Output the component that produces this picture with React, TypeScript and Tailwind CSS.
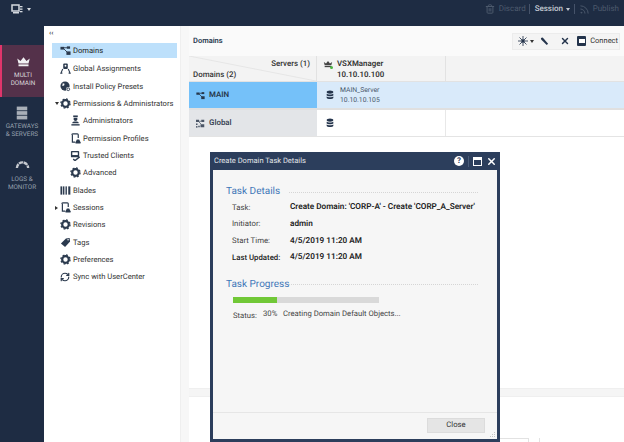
import React from "react";
import { RefreshCw, X, Trash2, Rss } from "lucide-react";

const D = "#2b3a4e";
const Svg = ({ s = 11, c = D, children, className = "" }: { s?: number; c?: string; children: React.ReactNode; className?: string }) => (
  <svg width={s} height={s} viewBox="0 0 12 12" fill={c} stroke="none" className={`shrink-0 ${className}`}>{children}</svg>
);
const Net = ({ s = 11, c = D }: { s?: number; c?: string }) => (
  <Svg s={s} c={c}>
    <rect x="0.5" y="2" width="4" height="3" />
    <rect x="7.5" y="1.5" width="3.5" height="2.6" />
    <rect x="7" y="7" width="4.5" height="3.8" />
    <path d="M4 3h4M4 4l4 4" stroke={c} strokeWidth="1" fill="none" />
  </Svg>
);
const GlobalGrid = () => (
  <Svg s={9} c="#4a5566">
    <rect x="0" y="1" width="4" height="3" /><rect x="7" y="1" width="4" height="3" />
    <rect x="0" y="6" width="2" height="2" /><rect x="3" y="9" width="2" height="2" /><rect x="0" y="9.5" width="2" height="2" />
    <rect x="6" y="7" width="5" height="4" />
    <path d="M4 3h3M4 4l3 3" stroke="#4a5566" strokeWidth="1" fill="none" />
  </Svg>
);
const Gear = () => (
  <Svg>
    <circle cx="6" cy="6" r="3.6" fill="none" stroke={D} strokeWidth="2.4" />
    <circle cx="6" cy="6" r="5" fill="none" stroke={D} strokeWidth="1.4" strokeDasharray="2 1.93" />
  </Svg>
);
const Person = () => (
  <Svg>
    <rect x="3.5" y="0.5" width="5" height="6" rx="1" />
    <circle cx="6" cy="3" r="1" fill="#fff" />
    <path d="M3 6.5L1 11h1.6M9 6.5l2 4.500h-1.600" stroke={D} strokeWidth="1.2" fill="none" />
  </Svg>
);
const Globe = () => (
  <Svg>
    <circle cx="5.500" cy="5.500" r="5" />
    <path d="M3 2.500l2 .5-.5 2-2 .5z" fill="#fff" />
    <circle cx="9" cy="9" r="2.400" fill="#fff" />
    <circle cx="9" cy="9" r="1.500" fill="none" stroke={D} strokeWidth="1" />
  </Svg>
);
const Admin = () => (
  <Svg>
    <rect x="3.500" y="0.500" width="5" height="1.800" />
    <path d="M4 3h4v1.500a2 2 0 0 1-4 0z" />
    <path d="M2.500 8.500c0-1 1.500-1.500 3.500-1.500s3.500.5 3.500 1.500V9h-7z" />
    <rect x="1.500" y="10" width="9" height="1.500" />
  </Svg>
);
const Phone = () => (
  <Svg>
    <path d="M2 2a1 1 0 0 1 1-1h5a1 1 0 0 1 1 1v3.500" fill="none" stroke={D} strokeWidth="1.300" />
    <path d="M2.600 1.500v8.500h3" fill="none" stroke={D} strokeWidth="1.300" />
    <path d="M6 10l1.500-3h2.500l1.500 3v1.500H6z" />
  </Svg>
);
const Trusted = () => (
  <Svg>
    <rect x="1" y="1" width="9" height="7" rx="1" />
    <rect x="2.500" y="2.500" width="6" height="3" fill="#fff" />
    <path d="M3.500 10l2 1.500 5-4" fill="none" stroke={D} strokeWidth="1.500" />
  </Svg>
);
const Blades = () => (
  <Svg>
    <rect x="0.500" y="1.500" width="2" height="9" /><rect x="3.300" y="1.500" width="1.500" height="9" />
    <rect x="6" y="1.500" width="1.500" height="9" /><rect x="9" y="1.500" width="2.300" height="9" />
  </Svg>
);
const TagI = () => (
  <Svg><path d="M6.500 1.500l4-.5.5 4-5.500 6L1 7z" /><circle cx="8.800" cy="3" r=".8" fill="#fff" /></Svg>
);
const Sync = () => <RefreshCw size={10} strokeWidth={2.8} color={D} className="shrink-0" />;
const Crown = ({ s = 15, c = "#f1f1f3" }: { s?: number; c?: string }) => (
  <Svg s={s} c={c}>
    <path d="M1 3.500l2.600 2L6 2.500l2.400 3L11 3.500 10 7.500H2z" />
    <rect x="2" y="8.300" width="8" height="1.500" />
  </Svg>
);
const Rack = () => (
  <Svg s={14} c="#a9afb8">
    <rect x="1.500" y="0.500" width="9" height="3.200" /><rect x="1.500" y="4.400" width="9" height="3.200" /><rect x="1.500" y="8.300" width="9" height="3.200" />
  </Svg>
);
const GaugeI = () => (
  <Svg s={15} c="#c5c9cf">
    <path d="M1.500 8a4.500 4.500 0 0 1 9 0" fill="none" stroke="#c5c9cf" strokeWidth="1.900" strokeDasharray="3.400 .5" />
  </Svg>
);
const Db = () => (
  <Svg s={10} c="#24344c">
    <ellipse cx="6" cy="2.500" rx="4" ry="2" />
    <path d="M2 4.500c1 1.200 7 1.200 8 0v2c-1 1.200-7 1.200-8 0z" />
    <path d="M2 7.800c1 1.200 7 1.200 8 0v1.700c-1 1.800-7 1.800-8 0z" />
  </Svg>
);
const Star = () => (
  <Svg s={10} c="#24344c">
    <circle cx="6" cy="6" r="2" />
    <path d="M6 0v12M0 6h12M1.800 1.800l8.400 8.400M10.200 1.800l-8.400 8.400" stroke="#24344c" strokeWidth="1" />
  </Svg>
);
const Caret = ({ right = false }: { right?: boolean }) => (
  <span className={right ? "w-0 h-0 border-y-[2px] border-y-transparent border-l-[3px] border-l-[#333]" : "w-0 h-0 border-x-[2px] border-x-transparent border-t-[3px] border-t-[#333]"} />
);

const items: { label: string; Icon: any; indent?: boolean; caret?: "d" | "r"; active?: boolean }[] = [
  { label: "Domains", Icon: Net, active: true },
  { label: "Global Assignments", Icon: Person },
  { label: "Install Policy Presets", Icon: Globe },
  { label: "Permissions & Administrators", Icon: Gear, caret: "d" },
  { label: "Administrators", Icon: Admin, indent: true },
  { label: "Permission Profiles", Icon: Phone, indent: true },
  { label: "Trusted Clients", Icon: Trusted, indent: true },
  { label: "Advanced", Icon: Gear, indent: true },
  { label: "Blades", Icon: Blades },
  { label: "Sessions", Icon: Phone, caret: "r" },
  { label: "Revisions", Icon: Gear },
  { label: "Tags", Icon: TagI },
  { label: "Preferences", Icon: Gear },
  { label: "Sync with UserCenter", Icon: Sync },
];

const Rail = ({ icon, lines, active }: { icon: React.ReactNode; lines: string[]; active?: boolean }) => (
  <div className={`flex flex-col items-center pt-[9px] w-full h-[52px] ${active ? "bg-[#54314a] border-l-2 border-[#e0356b] text-[#dcd8dc]" : "text-[#98a1ae]"}`}>
    {icon}
    <div className="mt-[2px]">
      {lines.map((l) => (
        <div key={l} className="text-[6.4px] leading-[8px] text-center whitespace-nowrap">{l}</div>
      ))}
    </div>
  </div>
);

const Row = ({ k, v, bold }: { k: string; v: string; bold?: boolean }) => (
  <div className="flex items-center h-[16.7px]">
    <span className={`w-[58px] text-[7.8px] ${bold ? "font-medium text-[#222]" : "text-[#444]"}`}>{k}</span>
    <span className="text-[8.2px] font-semibold text-[#222] whitespace-nowrap">{v}</span>
  </div>
);

const Heading = ({ t }: { t: string }) => (
  <div className="flex items-center">
    <span className="w-[63px] text-[#3f76b8] text-[10px] leading-[14px] whitespace-nowrap">{t}</span>
    <span className="flex-1 border-t border-dotted border-[#d5d5d5]" />
  </div>
);

export default function App() {
  return (
    <div className="relative w-[624px] h-[442px] overflow-hidden bg-[#1e2c43] flex flex-col [text-rendering:geometricPrecision]" style={{ fontFamily: 'Roboto,"Open Sans",sans-serif' }}>
      <div className="h-[26px] flex items-start shrink-0">
        <div className="w-[44px] h-[18px] flex items-center pl-[11px] gap-[4px] text-[#d5d9df]">
          <Svg s={12} c="#d5d9df">
            <rect x="1" y="2" width="7" height="6" fill="none" stroke="#d5d9df" strokeWidth="1.500" />
            <rect x="2" y="9" width="6" height="1.500" /><rect x="9" y="3" width="2.500" height="1.300" /><rect x="9" y="5.500" width="2.500" height="1.300" /><rect x="9" y="8" width="2.500" height="1.300" />
          </Svg>
          <span className="w-0 h-0 border-x-[2px] border-x-transparent border-t-[3px] border-t-[#d5d9df]" />
        </div>
        <div className="ml-auto h-[18px] flex items-center text-[8px] pr-[5px]">
          <Trash2 size={10} strokeWidth={2.4} className="text-[#4d5a6d]" />
          <span className="ml-[4px] text-[#4d5a6d] w-[25px]">Discard</span>
          <span className="mx-[5px] h-[10px] w-px bg-[#46536a]" />
          <span className="text-[#c3c9d2] font-medium w-[26px]">Session</span>
          <span className="ml-[5px] w-0 h-0 border-x-[2px] border-x-transparent border-t-[3px] border-t-[#c3c9d2]" />
          <span className="mx-[4px] h-[10px] w-px bg-[#46536a]" />
          <Rss size={11} className="text-[#4d5a6d]" />
          <span className="ml-[3px] text-[#4d5a6d]">Publish</span>
        </div>
      </div>
      <div className="flex flex-1 min-h-0">
        <div className="w-[44px] shrink-0 flex flex-col pt-[19px]">
          <Rail icon={<Crown />} lines={["MULTI", "DOMAIN"]} active />
          <Rail icon={<Rack />} lines={["GATEWAYS", "& SERVERS"]} />
          <Rail icon={<GaugeI />} lines={["LOGS &", "MONITOR"]} />
        </div>
        <div className="w-[137px] shrink-0 bg-white border-r border-[#efefef] pt-[4px]">
          <div className="text-[7px] leading-[7px] text-[#333] pl-[5px] font-bold">‹‹</div>
          <div className="mt-[6px] ml-[8px] w-[125px]">
            {items.map(({ label, Icon, indent, caret, active }) => (
              <div key={label} className={`relative flex items-center h-[17.33px] text-[7.6px] whitespace-nowrap ${active ? "bg-[#bde0fb] bg-clip-padding border-b-2 border-transparent text-[#222]" : "text-[#333]"} ${indent ? "pl-[18px]" : "pl-[8px]"}`}>
                {caret && <span className="absolute left-[3px] top-[7px] flex"><Caret right={caret === "r"} /></span>}
                <span className="w-[13px] shrink-0 flex"><Icon /></span>
                {label}
              </div>
            ))}
          </div>
        </div>
        <div className="w-[8px] shrink-0 bg-[#f7f7f7]" />
        <div className="flex-1 min-w-0 bg-white flex flex-col">
          <div className="h-[30px] shrink-0 bg-[#fafafa] flex items-center pl-[4px]">
            <span className="text-[7.5px] font-semibold text-[#2a3a50]">Domains</span>
            <div className="ml-auto flex items-center h-[17px] bg-[#f4f4f4] border border-[#ececec] pl-[5px] pr-[1px] mr-[4px] text-[#24344c]">
              <span className="flex items-center gap-[2px] w-[19px]"><Star /><Caret /></span>
              <svg width="9" height="9" viewBox="0 0 10 10" className="ml-[3px]"><path d="M1 1l2-.5 6 7-1.500 1.500-6-6z" fill="#24344c" /></svg>
              <X size={10} strokeWidth={3.4} className="ml-[11px]" />
              <span className="ml-[7px] flex items-center gap-[4px] text-[7.5px] text-[#333]"><span className="w-[9px] h-[10px] rounded-[1px] bg-[#24344c] flex items-center justify-center"><span className="w-[6px] h-[4px] bg-white" /></span>Connect</span>
            </div>
          </div>
          <div className="grid grid-cols-[128px_129px_1fr] grid-rows-[26px_28px_26px] text-[7.9px] border-b border-[#e4e4e4]">
            <div className="bg-[#f3f3f3] border-r border-b border-[#e2e2e2] relative px-[4px] text-[#333] font-medium">
              <svg className="absolute inset-0 w-full h-full" preserveAspectRatio="none" viewBox="0 0 100 100"><path d="M0 0L100 100" stroke="#e6e6e6" strokeWidth="1" vectorEffect="non-scaling-stroke" /></svg>
              <div className="relative text-right pr-[2px] mt-[2px] leading-[11px]">Servers (1)</div>
              <div className="relative leading-[11px]">Domains (2)</div>
            </div>
            <div className="bg-[#f3f3f3] border-r border-b border-[#e2e2e2] font-semibold leading-[11px] text-[#333] pt-[2px] pl-[6px]">
              <div className="flex items-center gap-[4px]">
                <span className="relative flex"><Crown s={10} c="#444" /><span className="absolute right-0 bottom-0 w-[3px] h-[3px] rounded-full bg-[#4bb543]" /></span>
                VSXManager
              </div>
              <div className="pl-[14px]">10.10.10.100</div>
            </div>
            <div className="bg-[#f3f3f3] border-b border-[#e2e2e2]" />
            <div className="bg-[#75c1f9] flex items-center pl-[7px] gap-[4px] font-semibold text-[#26364a] border-b-2 border-[#e0e0e0]"><Net s={9} c="#26364a" />MAIN</div>
            <div className="bg-[#d9eafa] flex items-center pl-[8px] gap-[5px] border-b-2 border-[#e0e0e0]">
              <Db />
              <div className="text-[6.8px] leading-[10px] text-[#48576a]">MAIN_Server<br />10.10.10.105</div>
            </div>
            <div className="bg-[#d9eafa] border-b-2 border-[#e0e0e0]" />
            <div className="bg-[#e3e5e8] flex items-center pl-[7px] gap-[4px] font-semibold text-[#3a4656]"><GlobalGrid />Global</div>
            <div className="bg-white border-r border-[#e8e8e8] flex items-center pl-[8px]"><Db /></div>
            <div className="bg-white" />
          </div>
          <div className="flex-1 min-h-0 flex flex-col">
            <div className="flex-1" />
            <div className="h-[9px] bg-[#f5f5f5] border-y border-[#efefef]" />
            <div className="h-[45px] bg-white pt-[41px] flex">
              <div className="ml-auto w-[60px] h-[10px] bg-white border-t border-r border-[#e2e2e2]" />
              <div className="ml-[10px] mr-[84px] w-px bg-[#e2e2e2]" />
            </div>
          </div>
        </div>
      </div>

      <div className="absolute left-[210px] top-[152px] w-[290px] h-[290px] bg-[#f6f6f6] border-[3px] border-t-0 border-[#2c3e5c] flex flex-col">
        <div className="-mx-[3px] h-[18px] shrink-0 bg-[#2c3e5c] flex items-center pl-[4px] pr-[3px] text-[7.5px] text-[#e3e6ea]">
          Create Domain Task Details
          <div className="ml-auto flex items-center text-white">
            <span className="w-[10px] h-[10px] rounded-full bg-white text-[#2c3e5c] text-[8px] leading-[10px] font-bold text-center">?</span>
            <span className="ml-[4px] w-px h-[11px] bg-[#4a5c79]" />
            <span className="ml-[4px] w-[9px] h-[9px] border border-t-[3px] border-white" />
            <X size={11} strokeWidth={3.2} className="ml-[4px]" />
          </div>
        </div>
        <div className="flex-1 pl-[13px] pr-[19px] pt-[15px] relative">
          <Heading t="Task Details" />
          <div className="pl-[6px]">
            <Row k="Task:" v="Create Domain: 'CORP-A' - Create 'CORP_A_Server'" />
            <Row k="Initiator:" v="admin" />
            <Row k="Start Time:" v="4/5/2019 11:20 AM" />
            <Row k="Last Updated:" v="4/5/2019 11:20 AM" bold />
          </div>
          <div className="mt-[12px]"><Heading t="Task Progress" /></div>
          <div className="ml-[7px] mt-[5px] w-[146px] h-[6px] bg-[#d9d9d9]">
            <div className="h-full bg-[#71c837]" style={{ width: "30%" }} />
          </div>
          <div className="ml-[7px] mt-[4px] flex text-[7.7px] text-[#444] whitespace-nowrap leading-[14px]">
            <span className="w-[30px] pt-[2px]">Status:</span>
            <span className="w-[20px]">30%</span>
            <span>Creating Domain Default Objects...</span>
          </div>
        </div>
        <div className="relative h-[27px] shrink-0 border-t border-[#e6e6e6] flex items-center justify-end pr-[12px] pb-[2px]">
          <div className="w-[58px] h-[15px] bg-[#e5e5e5] border border-[#dcdcdc] flex items-center justify-center text-[7.7px] text-[#333]">Close</div>
          <svg width="6" height="6" viewBox="0 0 6 6" className="absolute right-[1px] bottom-[1px]" fill="#c4c4c4"><rect x="4" y="0" width="1" height="1" /><rect x="2" y="2" width="1" height="1" /><rect x="4" y="2" width="1" height="1" /><rect x="0" y="4" width="1" height="1" /><rect x="2" y="4" width="1" height="1" /><rect x="4" y="4" width="1" height="1" /></svg>
        </div>
      </div>
    </div>
  );
}
